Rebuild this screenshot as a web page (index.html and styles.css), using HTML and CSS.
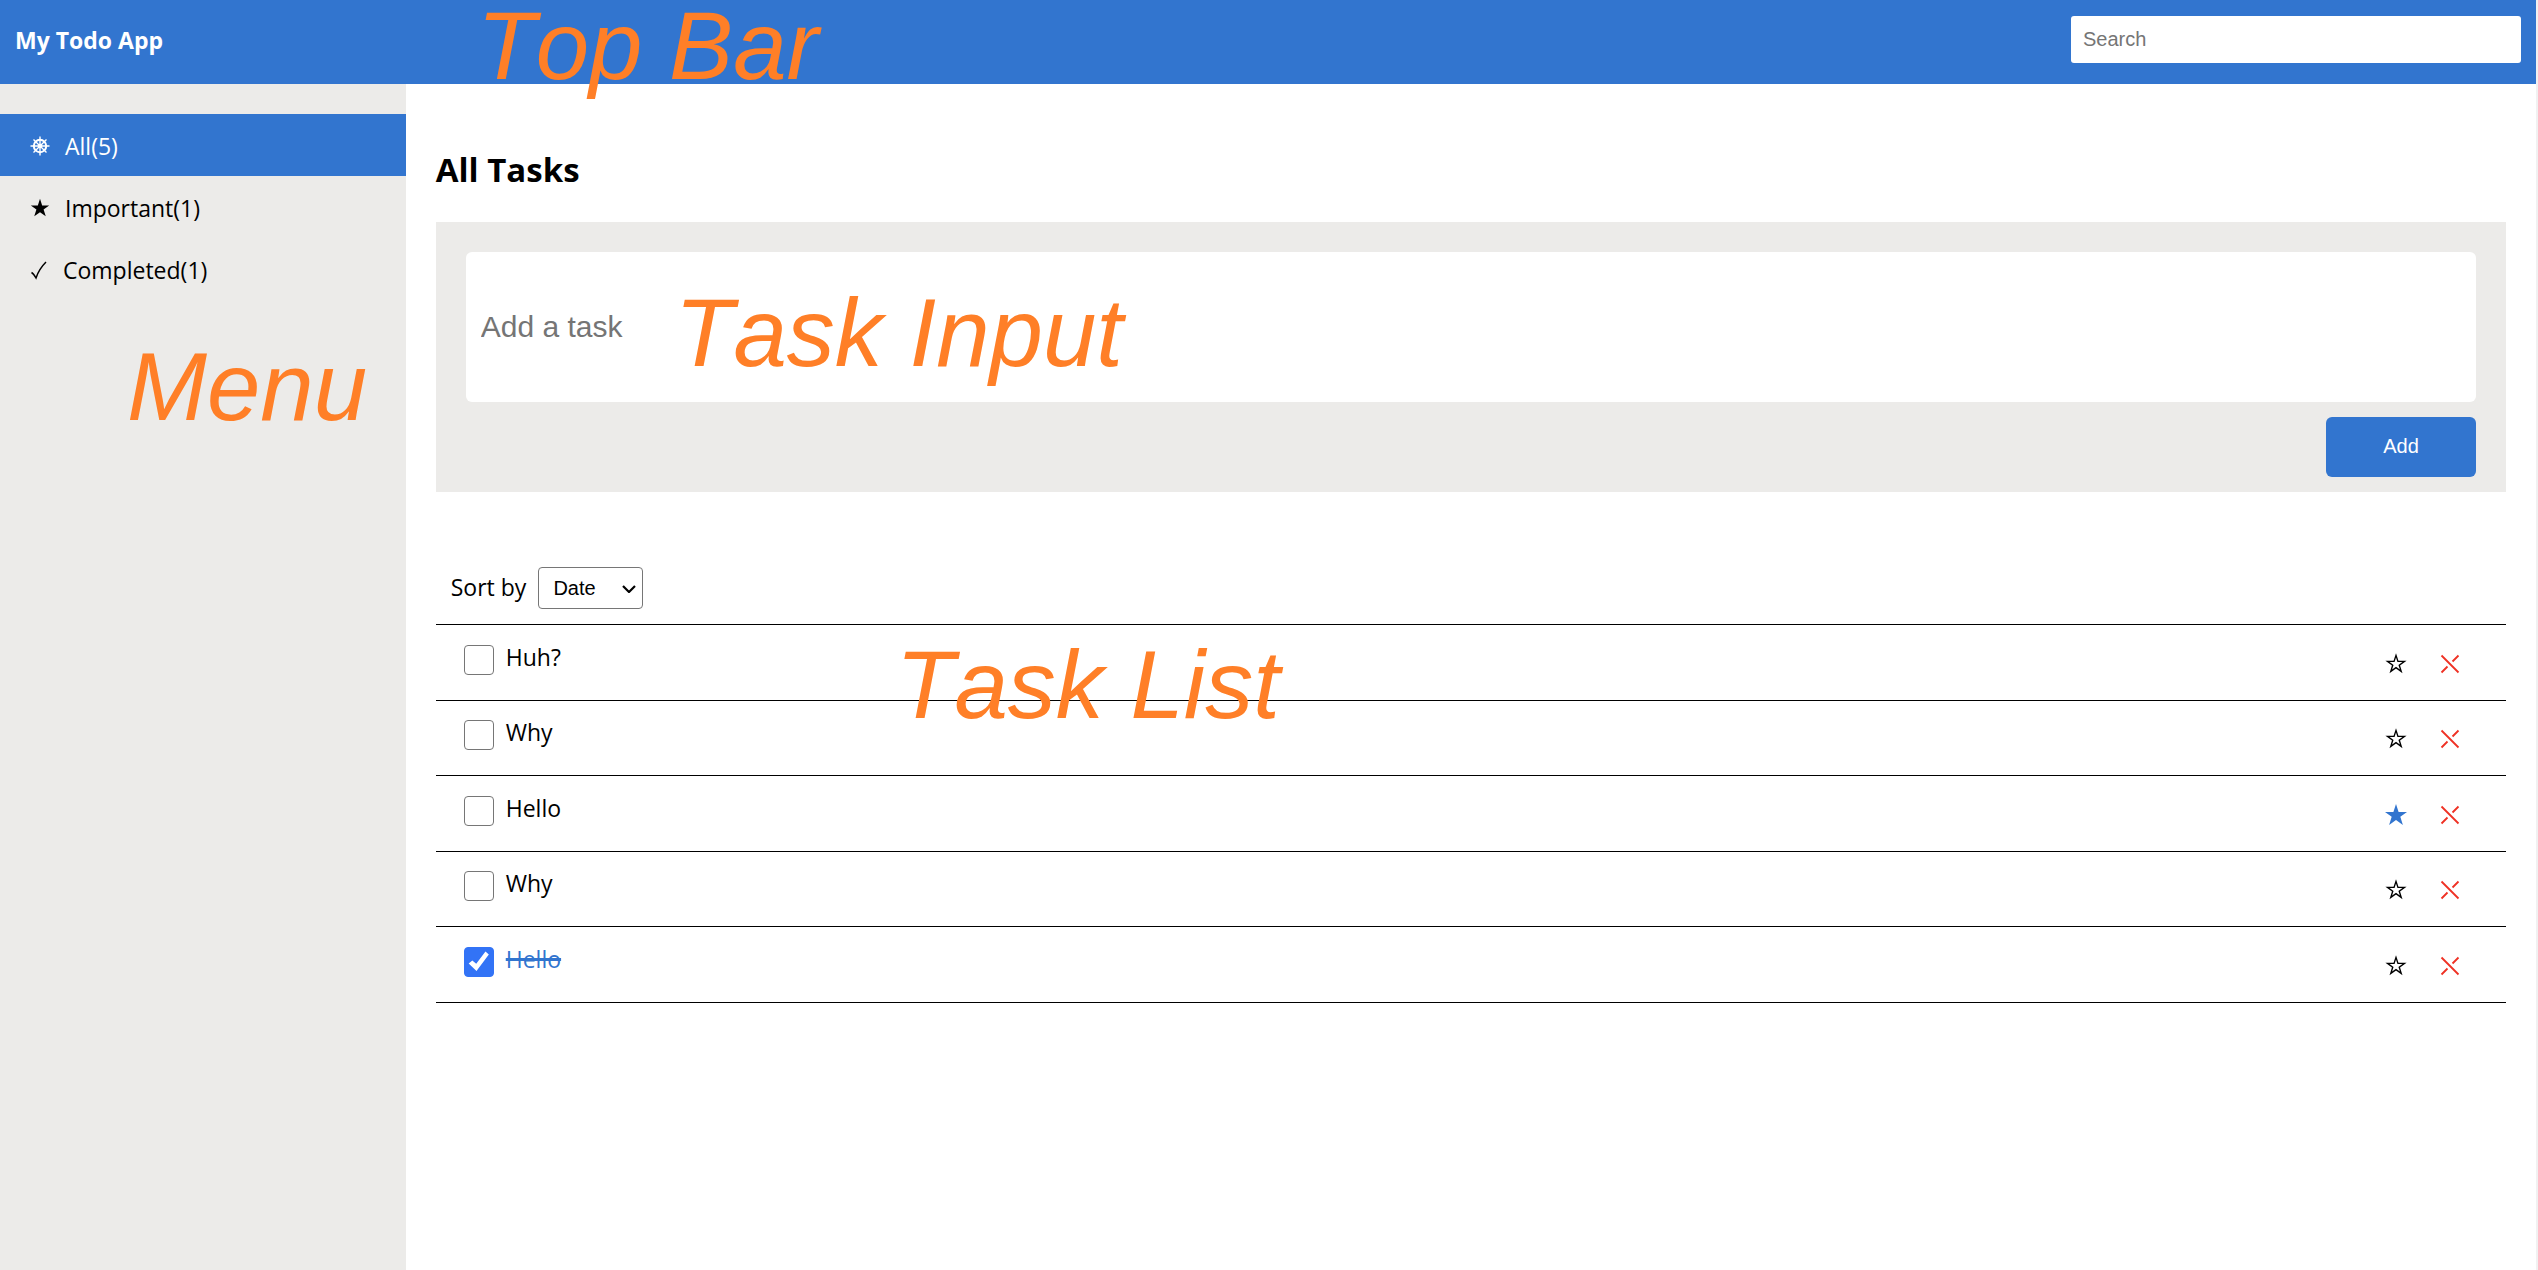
FILE: index.html
```html
<!DOCTYPE html>
<html lang="en">
<head>
<meta charset="utf-8">
<meta name="viewport" content="width=device-width, initial-scale=1">
<title>My Todo App</title>
<link rel="stylesheet" href="styles.css">
</head>
<body>
<svg class="sprite" aria-hidden="true">
  <symbol id="star" viewBox="0 0 24 24"><path d="M12 1l2.6 7.9H23l-6.7 4.9 2.6 8.1L12 17l-6.9 4.9 2.6-8.1L1 8.9h8.4z"/></symbol>
  <symbol id="star-outline" viewBox="0 0 24 24"><path fill="none" stroke="currentColor" stroke-width="1.400" d="M12 3.400l1.950 6h6.500l-5.200 3.800 1.950 6.200L12 15.600l-5.200 3.800 1.950-6.200-5.200-3.800h6.500z"/></symbol>
  <symbol id="cross" viewBox="0 0 20 20"><path fill="none" stroke="currentColor" stroke-width="1.800" d="M1.500 1.500l17 17M18.500 1.500l-6 6M7.500 12.500l-6 6"/></symbol>
</svg>
<header class="topbar">
  <h1 class="brand">My Todo App</h1>
  <input class="search" type="search" placeholder="Search" aria-label="Search">
</header>
<div class="layout">
  <nav class="menu">
    <a class="menu-item active" href="#all">
      <svg class="menu-icon" viewBox="0 0 20 20" fill="none" stroke="currentColor"><circle cx="10" cy="10" r="6.200" stroke-width="2"/><circle cx="10" cy="10" r="1.500" stroke-width="1.500"/><path stroke-width="1.400" d="M10 .5v19M.5 10h19M3.500 3.500l13 13M16.500 3.500l-13 13"/></svg>All(5)</a>
    <a class="menu-item" href="#important">
      <svg class="menu-icon" viewBox="0 0 24 24" fill="currentColor"><use href="#star"/></svg>Important(1)</a>
    <a class="menu-item" href="#completed">
      <svg class="menu-icon narrow" viewBox="0 0 18 20" fill="none" stroke="currentColor" stroke-width="1.500"><path d="M1.500 12.500q2 1 4.500 5.500Q9 9 16 2"/></svg>Completed(1)</a>
    <span class="note note-menu">Menu</span>
  </nav>
  <main class="content">
    <h2 class="title">All Tasks</h2>
    <form class="entry">
      <input class="entry-text" type="text" placeholder="Add a task" aria-label="Add a task">
      <button class="entry-add" type="button">Add</button>
      <span class="note note-input">Task Input</span>
    </form>
    <section class="tasks">
      <div class="sort">
        <label for="sort">Sort by</label>
        <span class="select"><select id="sort"><option>Date</option></select><svg viewBox="0 0 14 8" fill="none" stroke="currentColor" stroke-width="2.200"><path d="M1 1l6 6 6-6"/></svg></span>
      </div>
      <ul class="list">
        <li class="task"><label class="task-label"><input type="checkbox"><span>Huh?</span></label>
          <button class="icon-button" type="button" aria-label="Mark as important"><svg class="star"><use href="#star-outline"/></svg></button>
          <button class="icon-button delete" type="button" aria-label="Delete"><svg class="cross"><use href="#cross"/></svg></button></li>
        <li class="task"><label class="task-label"><input type="checkbox"><span>Why</span></label>
          <button class="icon-button" type="button" aria-label="Mark as important"><svg class="star"><use href="#star-outline"/></svg></button>
          <button class="icon-button delete" type="button" aria-label="Delete"><svg class="cross"><use href="#cross"/></svg></button></li>
        <li class="task"><label class="task-label"><input type="checkbox"><span>Hello</span></label>
          <button class="icon-button marked" type="button" aria-label="Remove from important"><svg class="star"><use href="#star"/></svg></button>
          <button class="icon-button delete" type="button" aria-label="Delete"><svg class="cross"><use href="#cross"/></svg></button></li>
        <li class="task"><label class="task-label"><input type="checkbox"><span>Why</span></label>
          <button class="icon-button" type="button" aria-label="Mark as important"><svg class="star"><use href="#star-outline"/></svg></button>
          <button class="icon-button delete" type="button" aria-label="Delete"><svg class="cross"><use href="#cross"/></svg></button></li>
        <li class="task done"><label class="task-label"><input type="checkbox" checked><span>Hello</span></label>
          <button class="icon-button" type="button" aria-label="Mark as important"><svg class="star"><use href="#star-outline"/></svg></button>
          <button class="icon-button delete" type="button" aria-label="Delete"><svg class="cross"><use href="#cross"/></svg></button></li>
      </ul>
      <span class="note note-list">Task List</span>
    </section>
  </main>
</div>
<span class="note note-topbar">Top Bar</span>
</body>
</html>
```

FILE: styles.css
```css
:root {
  --blue: #3275cf;
  --grey: #ecebe9;
  --ui: "Liberation Sans", Arial, sans-serif;
}

* { box-sizing: border-box; }

body {
  position: relative;
  margin: 0;
  min-height: 100vh;
  display: flex;
  flex-direction: column;
  border-right: 2px solid #f1f1f1;
  background: #fff;
  color: #000;
  font: 23px/32px "Open Sans", "Noto Sans", sans-serif;
}

.sprite { position: absolute; width: 0; height: 0; }

input, button, select { font-family: var(--ui); font-size: 20px; }
input::placeholder { color: #757575; opacity: 1; }

/* Top bar */
.topbar {
  display: flex;
  justify-content: space-between;
  align-items: flex-start;
  height: 84px;
  padding: 16px 15px;
  background: var(--blue);
}
.brand { margin: 8px 0 0; color: #fff; font-size: 23px; line-height: 32px; }
.search {
  width: 450px;
  height: 47px;
  padding: 0 12px;
  border: 0;
  border-radius: 3px;
  background: #fff;
  appearance: none;
}

/* Side menu */
.layout { flex: 1; display: flex; }
.menu { position: relative; flex: none; width: 16%; padding-top: 30px; background: var(--grey); }
.menu-item {
  display: flex;
  align-items: center;
  gap: 15px;
  height: 62px;
  padding: 2px 30px 0;
  color: #000;
  text-decoration: none;
}
.menu-item.active { background: var(--blue); color: #fff; }
.menu-icon { width: 20px; height: 20px; }
.menu-icon.narrow { width: 18px; }

/* Main column */
.content { flex: 1; min-width: 0; padding: 62px 30px; }
.title { margin: 0 0 28px; font-size: 33px; line-height: 48px; }
.entry {
  position: relative;
  display: flex;
  flex-direction: column;
  align-items: flex-end;
  gap: 15px;
  padding: 30px 30px 15px;
  background: var(--grey);
}
.entry-text {
  width: 100%;
  height: 150px;
  padding: 0 15px;
  border: 0;
  border-radius: 6px;
  background: #fff;
  font-size: 30px;
}
.entry-add {
  width: 150px;
  height: 60px;
  padding: 0 0 2px;
  border: 0;
  border-radius: 6px;
  background: var(--blue);
  color: #fff;
}

/* Task list */
.tasks { position: relative; margin-top: 60px; }
.sort { display: flex; align-items: center; gap: 12px; padding: 15px; }
.sort label { padding-bottom: 3px; }
.select { position: relative; display: flex; }
.select select {
  width: 105px;
  height: 42px;
  padding: 0 14px;
  border: 1px solid #767676;
  border-radius: 4px;
  background: #fff;
  color: #000;
  appearance: none;
}
.select svg { position: absolute; right: 7px; top: 18px; width: 14px; height: 8px; pointer-events: none; }
.list { margin: 0; padding: 0; list-style: none; border-top: 1px solid #000; }
.task {
  display: flex;
  align-items: center;
  height: 76px;
  padding: 2px 39px 0 28px;
  border-bottom: 1px solid #000;
}
.task:nth-child(even) { height: 75px; }
.task-label { flex: 1; display: flex; align-items: center; gap: 12px; height: 42px; margin-bottom: 8px; }
.task-label span { padding-bottom: 6px; }
.task-label input {
  width: 30px;
  height: 30px;
  margin: 0;
  border: 1px solid #767676;
  border-radius: 4px;
  background: #fff;
  appearance: none;
}
.task-label input:checked { border-color: #3273f6; background: #3273f6; }
.task-label input:checked::before {
  content: "";
  display: block;
  height: 28px;
  background: #fff;
  clip-path: polygon(14% 57%, 27% 46%, 41% 58%, 74% 14%, 86% 25%, 42% 84%);
}
.done span { color: var(--blue); text-decoration: line-through; text-decoration-thickness: 3px; }
.icon-button {
  display: flex;
  align-items: center;
  justify-content: center;
  width: 34px;
  height: 34px;
  margin-left: 20px;
  padding: 0;
  border: 0;
  background: none;
  color: #000;
  fill: currentColor;
}
.icon-button.marked { color: var(--blue); }
.icon-button.delete { color: #ef3124; }
.star { width: 24px; height: 24px; }
.cross { width: 20px; height: 20px; }

/* Area labels laid over the interface */
.note {
  position: absolute;
  z-index: 1;
  color: #ff7f27;
  font: italic 96px/96px var(--ui);
  font-kerning: none;
  white-space: nowrap;
  pointer-events: none;
}
.note-topbar { left: 477px; top: -2px; }
.note-menu { left: 127px; top: 255px; }
.note-input { left: 239px; top: 63px; }
.note-list { left: 460px; top: 85px; }
```
